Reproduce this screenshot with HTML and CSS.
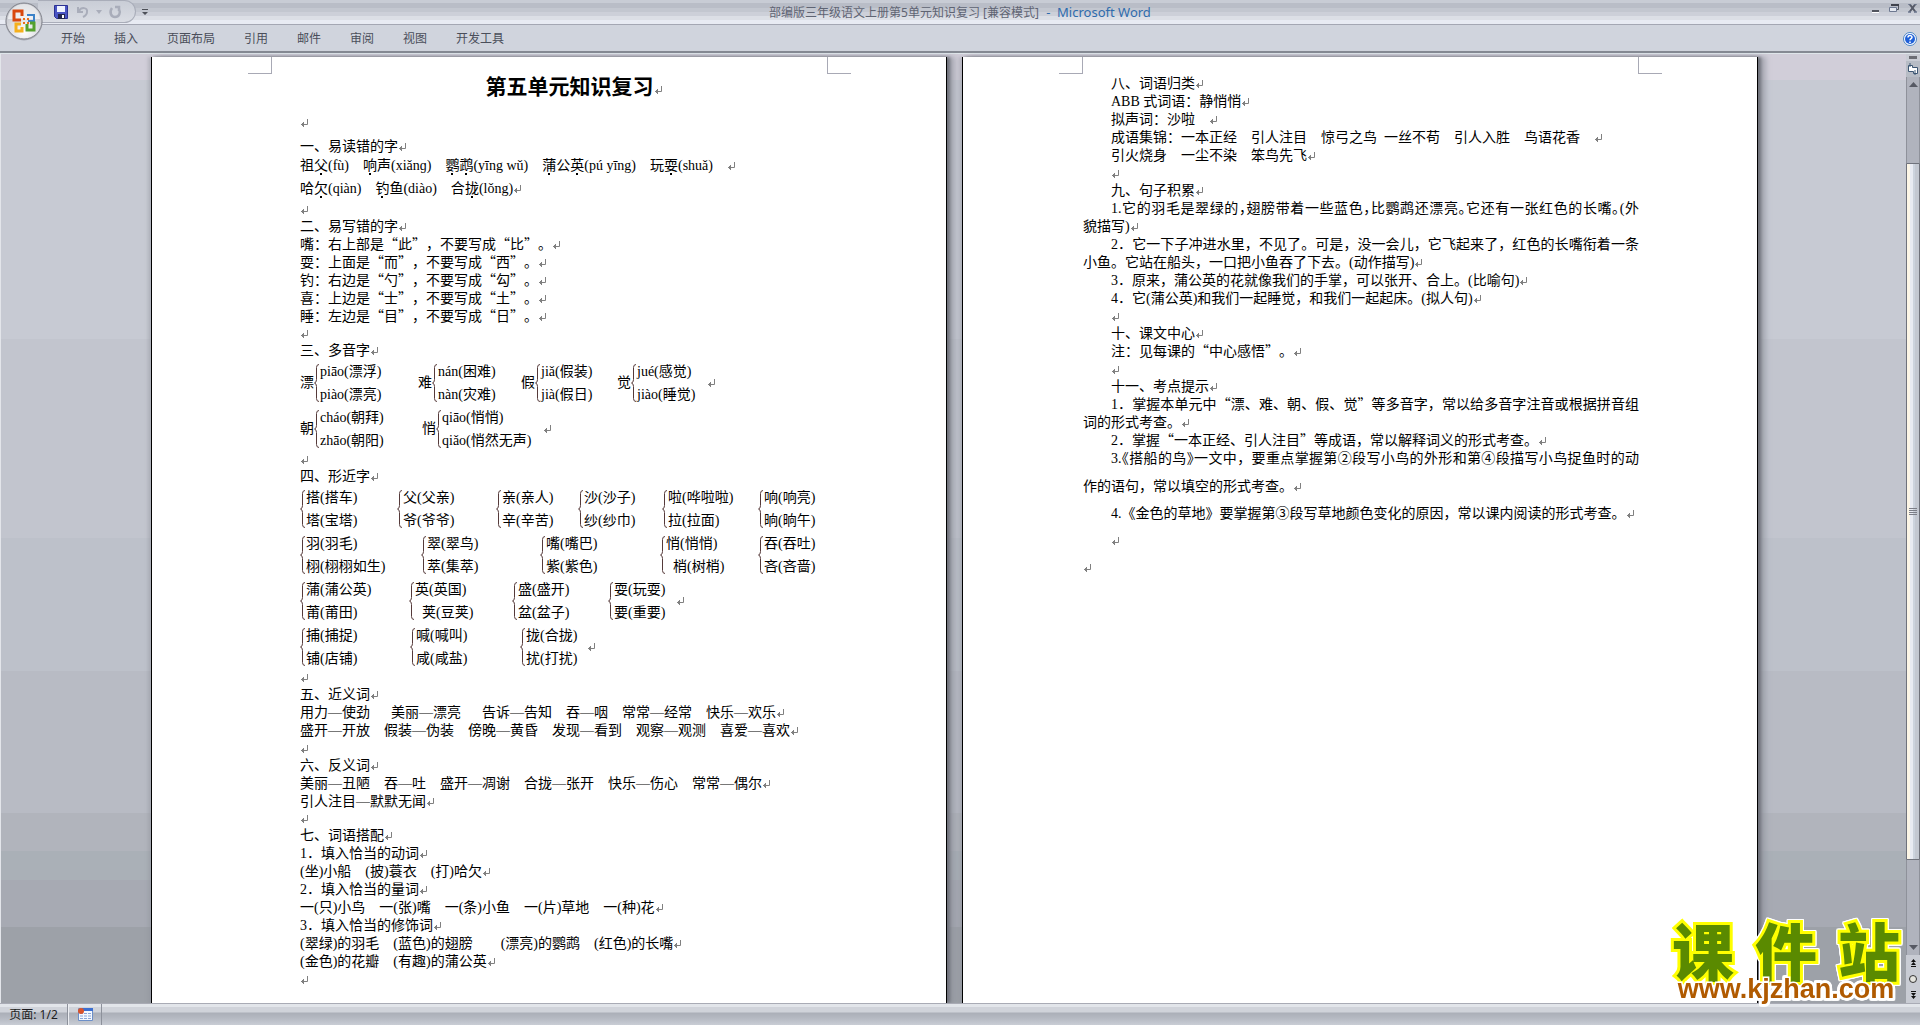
FILE: index.html
```html
<!DOCTYPE html>
<html lang="zh-CN">
<head>
<meta charset="utf-8">
<title>部编版三年级语文上册第5单元知识复习 [兼容模式] - Microsoft Word</title>
<link rel="stylesheet" href="styles.css">
</head>
<body>
<header class="titlebar">
  <div class="tools">
    <div class="quick">
      <button class="qbtn" aria-label="保存"><svg width="14" height="14" viewBox="0 0 14 14"><path d="M.5.5h13v13h-11l-2-2z" fill="#4a55c4" stroke="#2b3192"/><path d="M3 1h8v6H3z" fill="#eef3ff"/><path d="M4 9h7v5H4z" fill="#22264f"/><path d="M8 10h2v3H8z" fill="#fff"/></svg></button>
      <button class="qbtn" aria-label="撤消"><svg width="14" height="14" viewBox="0 0 14 14"><path d="M2 2v5h5M3 6c2-4 9-4 8 1 0 3-2 4-4 5" fill="none" stroke="#a9adba" stroke-width="2"/></svg></button>
      <button class="qbtn small" aria-label="撤消列表"><svg width="6" height="4" viewBox="0 0 6 4"><path d="M0 0h6L3 4z" fill="#a9adba"/></svg></button>
      <button class="qbtn" aria-label="恢复"><svg width="14" height="14" viewBox="0 0 14 14"><path d="M7 2h4v4M11 4c2 4 0 8-4 8S1 7 4 3" fill="none" stroke="#a9adba" stroke-width="2.500"/></svg></button>
    </div>
    <button class="more" aria-label="自定义快速访问工具栏"><svg width="6" height="6" viewBox="0 0 6 6"><path d="M0 0h6v1H0zM0 3h6L3 6z" fill="#4d5058"/></svg></button>
  </div>
  <h1 class="caption">部编版三年级语文上册第5单元知识复习 [兼容模式] <span class="app">- &nbsp;Microsoft Word</span></h1>
  <div class="winbtns">
    <button aria-label="最小化"><svg width="9" height="9" viewBox="0 0 9 9"><path d="M1 6h7v2H1z" fill="#51545e"/><path d="M1 8h7v1H1z" fill="#fff"/></svg></button>
    <button aria-label="还原"><svg width="10" height="9" viewBox="0 0 10 9"><path d="M2.500 1h7v4.500h-2" fill="none" stroke="#51545e"/><path d="M2 0h8v2H2z" fill="#3f424c"/><path d="M.5 3.500h7v4h-7z" fill="#e4e8f0" stroke="#6d7890"/></svg></button>
    <button aria-label="关闭"><svg width="9" height="9" viewBox="0 0 9 9"><path d="M1.500 0l6 8M7.500 0l-6 8" stroke="#555a68" stroke-width="2" fill="none"/><path d="M0 0h3M6 0h3M0 8h3M6 8h3" stroke="#6d7890" stroke-width="1.500"/></svg></button>
  </div>
</header>
<button class="office" aria-label="Office 按钮"><svg width="38" height="40" viewBox="0 0 38 40">
  <defs><radialGradient id="orb" cx=".5" cy=".8" r=".8"><stop offset="0" stop-color="#fff"/><stop offset=".5" stop-color="#dcdde2"/><stop offset="1" stop-color="#b4b6be"/></radialGradient></defs>
  <circle cx="19" cy="20" r="18.500" fill="#8b8e98" opacity=".6"/><circle cx="19" cy="19" r="18" fill="url(#orb)" stroke="#85878f"/><path d="M3 17a16 15 0 0 1 32 0z" fill="#fff" opacity=".6"/>
  <g fill="none" stroke-width="3"><path d="M16 18H9V9h8v5" stroke="#d9480f"/><path d="M22 13h7v6h-6" stroke="#3c82c8" stroke-width="2"/><path d="M16 22h-5v7h6v-4" stroke="#f5b01c"/><path d="M22 22v6h7v-7h-4" stroke="#55a12d"/></g>
  <path d="M18 16h2v2h-2zM22 16h2v2h-2zM18 20h2v2h-2zM22 20h2v2h-2z" fill="#e8701c"/></svg></button>
<nav class="tabs">
  <button>开始</button><button>插入</button><button>页面布局</button><button>引用</button><button>邮件</button><button>审阅</button><button>视图</button><button>开发工具</button>
  <button class="help" aria-label="帮助"><svg width="14" height="14" viewBox="0 0 14 14"><circle cx="7" cy="7" r="6.500" fill="#fff" stroke="#4b83c4"/><circle cx="7" cy="7" r="5" fill="#2060d8"/><path d="M5 5.500c0-2.500 4-2.500 4-.2C9 6.700 7 6.600 7 8.300" fill="none" stroke="#fff" stroke-width="1.500"/><path d="M6.200 9.500h1.600V11H6.200z" fill="#fff"/></svg></button>
</nav>
<main class="workspace">
  <div class="desk">
    <article class="page">
      <div class="marks"><i class="mark start"></i><i class="mark end"></i></div>
      <div class="text first">
        <h2>第五单元知识复习</h2>
        <p class="lead"></p>
        <h3>一、易读错的字</h3>
        <p class="tall">祖<em>父</em>(fù)　<em>响</em>声(xiǎnɡ)　<em>鹦</em><em>鹉</em>(yīng wǔ)　<em>蒲</em>公<em>英</em>(pú yīng)　玩<em>耍</em>(shuǎ)　</p>
        <p class="tall">哈<em>欠</em>(qiàn)　<em>钓</em>鱼(diào)　合<em>拢</em>(lǒng)</p>
        <p class="blank tight"></p>
        <h3>二、易写错的字</h3>
        <p>嘴：右上部是<q>此</q>，不要写成<q>比</q>。</p>
        <p>耍：上面是<q>而</q>，不要写成<q>西</q>。</p>
        <p>钓：右边是<q>勺</q>，不要写成<q>勾</q>。</p>
        <p>喜：上边是<q>士</q>，不要写成<q>土</q>。</p>
        <p>睡：左边是<q>目</q>，不要写成<q>日</q>。</p>
        <p class="blank tight"></p>
        <h3>三、多音字</h3>
        <div class="row sounds-a"><span class="set">漂<span class="pair">piāo(漂浮)<br>piào(漂亮)</span></span><span class="set">难<span class="pair">nán(困难)<br>nàn(灾难)</span></span><span class="set">假<span class="pair">jiǎ(假装)<br>jià(假日)</span></span><span class="set">觉<span class="pair">jué(感觉)<br>jiào(睡觉)</span></span><span class="ret"></span></div>
        <div class="row sounds-b"><span class="set">朝<span class="pair">cháo(朝拜)<br>zhāo(朝阳)</span></span><span class="set">悄<span class="pair">qiāo(悄悄)<br>qiǎo(悄然无声)</span></span><span class="ret"></span></div>
        <p class="blank tight"></p>
        <h3>四、形近字</h3>
        <div class="row forms-a"><span class="pair">搭(搭车)<br>塔(宝塔)</span><span class="pair">父(父亲)<br>爷(爷爷)</span><span class="pair">亲(亲人)<br>辛(辛苦)</span><span class="pair">沙(沙子)<br>纱(纱巾)</span><span class="pair">啦(哗啦啦)<br>拉(拉面)</span><span class="pair">响(响亮)<br>晌(晌午)</span></div>
        <div class="row forms-b"><span class="pair">羽(羽毛)<br>栩(栩栩如生)</span><span class="pair">翠(翠鸟)<br>萃(集萃)</span><span class="pair">嘴(嘴巴)<br>紫(紫色)</span><span class="pair">悄(悄悄)<br>&nbsp;&nbsp;梢(树梢)</span><span class="pair">吞(吞吐)<br>吝(吝啬)</span></div>
        <div class="row forms-c"><span class="pair">蒲(蒲公英)<br>莆(莆田)</span><span class="pair">英(英国)<br>&nbsp;&nbsp;荚(豆荚)</span><span class="pair">盛(盛开)<br>盆(盆子)</span><span class="pair">耍(玩耍)<br>要(重要)</span><span class="ret"></span></div>
        <div class="row forms-d"><span class="pair">捕(捕捉)<br>铺(店铺)</span><span class="pair">喊(喊叫)<br>咸(咸盐)</span><span class="pair">拢(合拢)<br>扰(打扰)</span><span class="ret"></span></div>
        <p class="blank tight"></p>
        <h3>五、近义词</h3>
        <p>用力—使劲　&nbsp;&nbsp;美丽—漂亮　&nbsp;&nbsp;告诉—告知　吞—咽　常常—经常　快乐—欢乐</p>
        <p>盛开—开放　假装—伪装　傍晚—黄昏　发现—看到　观察—观测　喜爱—喜欢</p>
        <p class="blank"></p>
        <h3>六、反义词</h3>
        <p>美丽—丑陋　吞—吐　盛开—凋谢　合拢—张开　快乐—伤心　常常—偶尔</p>
        <p>引人注目—默默无闻</p>
        <p class="blank tight"></p>
        <h3>七、词语搭配</h3>
        <h4>1．填入恰当的动词</h4>
        <p>(坐)小船　(披)蓑衣　(打)哈欠</p>
        <h4>2．填入恰当的量词</h4>
        <p>一(只)小鸟　一(张)嘴　一(条)小鱼　一(片)草地　一(种)花</p>
        <h4>3．填入恰当的修饰词</h4>
        <p>(翠绿)的羽毛　(蓝色)的翅膀　　(漂亮)的鹦鹉　(红色)的长嘴</p>
        <p>(金色)的花瓣　(有趣)的蒲公英</p>
        <p class="blank"></p>
      </div>
    </article>
    <article class="page">
      <div class="marks"><i class="mark start"></i><i class="mark end"></i></div>
      <div class="text second">
        <h3>八、词语归类</h3>
        <p>ABB 式词语：静悄悄</p>
        <p>拟声词：沙啦　</p>
        <p>成语集锦：一本正经　引人注目　惊弓之鸟&nbsp;&nbsp;一丝不苟　引人入胜　鸟语花香　</p>
        <p>引火烧身　一尘不染　笨鸟先飞</p>
        <p class="blank"></p>
        <h3>九、句子积累</h3>
        <p class="full half">1.它的羽毛是翠绿的，翅膀带着一些蓝色，比鹦鹉还漂亮。它还有一张红色的长嘴。(外</p>
        <p class="rest">貌描写)</p>
        <p class="full">2．它一下子冲进水里，不见了。可是，没一会儿，它飞起来了，红色的长嘴衔着一条</p>
        <p class="rest">小鱼。它站在船头，一口把小鱼吞了下去。(动作描写)</p>
        <p>3．原来，蒲公英的花就像我们的手掌，可以张开、合上。(比喻句)</p>
        <p>4．它(蒲公英)和我们一起睡觉，和我们一起起床。(拟人句)</p>
        <p class="blank"></p>
        <h3>十、课文中心</h3>
        <p>注：见每课的<q>中心感悟</q>。</p>
        <p class="blank"></p>
        <h3>十一、考点提示</h3>
        <p class="full">1．掌握本单元中<q>漂、难、朝、假、觉</q>等多音字，常以给多音字注音或根据拼音组</p>
        <p class="rest">词的形式考查。</p>
        <p>2．掌握<q>一本正经、引人注目</q>等成语，常以解释词义的形式考查。</p>
        <p class="full">3.<span class="half">《</span>搭船的鸟<span class="half">》</span>一文中，要重点掌握第②段写小鸟的外形和第④段描写小鸟捉鱼时的动</p>
        <div class="loose">
          <p class="rest">作的语句，常以填空的形式考查。</p>
          <p>4.《金色的草地》要掌握第③段写草地颜色变化的原因，常以课内阅读的形式考查。</p>
          <p></p>
          <p class="rest"></p>
        </div>
      </div>
    </article>
  </div>
  <aside class="scroll">
    <i class="split"></i>
    <button class="ruler" aria-label="标尺"><svg width="12" height="12" viewBox="0 0 12 12"><path d="M1.500 2.500h4v2h5v6h-4v-2h-5z" fill="#fff" stroke="#3d5673"/><path d="M3 0v4M8 7v5" stroke="#3d5673"/></svg></button>
    <div class="track">
      <button aria-label="向上滚动"><svg width="9" height="5" viewBox="0 0 9 5"><path d="M4.500 0L9 5H0z" fill="#565963"/></svg></button>
      <div class="thumb"><i></i><i></i><i></i><i></i></div>
      <button aria-label="向下滚动"><svg width="9" height="5" viewBox="0 0 9 5"><path d="M0 0h9L4.500 5z" fill="#565963"/></svg></button>
    </div>
    <button class="jump" aria-label="前一页"><svg width="7" height="8" viewBox="0 0 7 8"><path d="M3.500 0L6 3H1zM3.500 3L6 6H1zM1 7h5v1H1z" fill="#111"/></svg></button>
    <button class="jump" aria-label="选择浏览对象"><svg width="8" height="8" viewBox="0 0 8 8"><circle cx="4" cy="4" r="3.500" fill="#e4e4de" stroke="#333"/></svg></button>
    <button class="jump" aria-label="下一页"><svg width="7" height="8" viewBox="0 0 7 8"><path d="M1 0h5v1H1zM1 2h5L3.500 5zM1 5h5L3.500 8z" fill="#111"/></svg></button>
  </aside>
</main>
<footer class="status">
  <button class="pages">页面: 1/2</button>
  <button class="macro" aria-label="录制宏"><svg width="15" height="13" viewBox="0 0 15 13"><path d="M.5.5h14v12H.5z" fill="#f4f8ff" stroke="#6c8fc8"/><path d="M4 0h11v3H4z" fill="#3c6fd0"/><path d="M2 5.500h11M2 8h11M2 10.500h11" stroke="#8aa6d8" stroke-dasharray="3 1"/><circle cx="3" cy="3" r="3" fill="#d9532c"/></svg></button>
</footer>
<div class="brand"><div class="name"><span>课</span><span>件</span><span>站</span></div><div class="site">www.kjzhan.com</div></div>
</body>
</html>
```
FILE: styles.css
```css
* { box-sizing: border-box; }
body {
  margin: 0;
  height: 100vh;
  display: flex;
  flex-direction: column;
  overflow: hidden;
  position: relative;
  background: #d0d4dd;
  font: 12px/16px "Noto Sans", "Noto Sans CJK SC", sans-serif;
  color: #4a4e5a;
  text-spacing-trim: space-all;
  text-autospace: no-autospace;
}
button {
  margin: 0;
  padding: 0;
  border: 0;
  background: none;
  color: inherit;
  font: inherit;
  display: flex;
  align-items: center;
  justify-content: center;
}
h1, h2, h3, h4, p { margin: 0; font-weight: 400; }
svg { display: block; }

.titlebar {
  flex: none;
  height: 25px;
  display: grid;
  grid-template-columns: 1fr auto 1fr;
  align-items: center;
  border-bottom: 1px solid #a4a7b3;
  background: linear-gradient(#c8ccd5 0 3px, #b9bdc7 3px 8px, #c3c7d0 8px 12px, #cdd0d9 12px 16px, #dcdfe6 16px 20px, #e8ebf3 20px);
}
.tools { display: flex; align-self: start; padding-left: 38px; }
.quick {
  display: flex;
  align-items: center;
  height: 23px;
  width: 98px;
  padding-left: 16px;
  gap: 8px;
  border: 1px solid #a9adb9;
  border-left: 0;
  border-radius: 0 12px 12px 0;
  background: linear-gradient(#c9cdd6, #dadde4);
}
.small { margin: 0 -2px; }
.more { padding-left: 6px; }
.caption { font-size: 12px; line-height: 18px; color: #5f6473; white-space: nowrap; }
.app { font-size: 13px; color: #2f6cad; padding-left: 4px; }
.winbtns { display: flex; justify-content: flex-end; gap: 9px; padding-right: 3px; align-self: start; padding-top: 4px; }

.office { position: absolute; left: 5px; top: 2px; }

.tabs {
  flex: none;
  height: 28px;
  display: flex;
  align-items: center;
  gap: 29px;
  padding: 2px 3px 0 61px;
  border-bottom: 2px solid #858a93;
}
.help { margin-left: auto; }

.workspace { flex: 1; min-height: 0; display: flex; border-top: 1px solid #dfe6ea; }
.desk {
  flex: 1;
  min-width: 0;
  display: flex;
  justify-content: center;
  gap: 15px;
  padding: 3px 0 0 2px;
  border-left: 1px solid #e3e5ea;
  background: linear-gradient(#d1ced9 0 26px, #c7cad3 26px 30%, #c2c5ce 30% 51%, #bdc1ca 51% 65%, #b8bbc4 65% 80%, #b1b4bc 80% 84%, #aab0b7 84% 87%, #a7aab3 87% 92%, #9da1a8 92%);
}
.page {
  flex: 0 1 796px;
  border: solid #000;
  border-width: 0 1px;
  background: #fff;
  box-shadow: 3px 0 3px #6f717a, 8px 0 5px #8f929c99, -3px 0 3px #8f929c66;
}
.marks { height: 17px; display: flex; justify-content: space-between; padding: 0 95px 0 96px; }
.mark { width: 24px; border-bottom: 1px solid #a8a9b5; }
.start { border-right: 1px solid #a8a9b5; }
.end { border-left: 1px solid #a8a9b5; }

.text {
  font: 14px/18px "Liberation Serif", "Noto Sans CJK SC", serif;
  color: #000;
  white-space: nowrap;
}
.first { padding: 1px 99px 0 148px; }
.second { padding: 1px 118px 0 120px; }
.second h3, .second p { padding-left: 28px; }
.second .rest { padding-left: 0; }
.text p, .text h3, .text h4 { font-size: 14px; height: 18px; line-height: 18px; }
.text h2 { font-size: 21px; line-height: 24px; font-weight: 700; text-align: center; margin-bottom: 9px; }
.text .lead { height: 30px; line-height: 30px; }
.text .tall { height: 23px; line-height: 20px; }
.text .blank { height: 17px; line-height: 17px; }
.text .tight { height: 16px; line-height: 16px; }
.text .full { text-align-last: justify; white-space: normal; }
.half { font-feature-settings: "halt"; }
.loose { padding-top: 5px; }
.loose p { height: 27px; line-height: 27px; }
.text q { quotes: none; }
.text q::before, .text q::after { font-family: "Noto Sans CJK SC", sans-serif; line-height: 1; }
.text q::before { content: "“"; }
.text q::after { content: "”"; }
.text em {
  font-style: normal;
  padding-bottom: 2px;
  background: linear-gradient(#000, #000) center bottom / 2px 2px no-repeat;
}
.text h2::after, .text h3::after, .text h4::after, .text p:not(.full)::after, .ret {
  content: "";
  display: inline-block;
  width: 8px;
  height: 8px;
  background: url("data:image/svg+xml,%3Csvg xmlns='http://www.w3.org/2000/svg' viewBox='0 0 8 8'%3E%3Cpath d='M7.500 0v5.500H1M3.500 3v5M2.500 4v3' fill='none' stroke='%23808080'/%3E%3C/svg%3E") no-repeat;
}
.row { display: grid; align-items: center; height: 46px; }
.set { display: flex; align-items: center; }
.pair {
  line-height: 23px;
  padding-left: 6px;
  background: url("data:image/svg+xml,%3Csvg xmlns='http://www.w3.org/2000/svg' width='6' height='38' viewBox='0 0 6 38'%3E%3Cpath d='M5 .5q-2.500 0-2.500 3v12q0 3-2 3.500 2 .5 2 3.500v12q0 3 2.500 3' fill='none' stroke='%23553a3a'/%3E%3C/svg%3E") 0 center no-repeat;
}
.sounds-a { grid-template-columns: 118px 103px 96px 90px 8px; }
.sounds-b { grid-template-columns: 122px 121px 8px; }
.forms-a { grid-template-columns: 97px 99px 82px 84px 96px 60px; }
.forms-b { grid-template-columns: 121px 119px 120px 98px 60px; }
.forms-c { grid-template-columns: 109px 103px 96px 68px 8px; }
.forms-d { grid-template-columns: 110px 110px 67px 8px; }

.scroll {
  flex: none;
  width: 14px;
  display: flex;
  flex-direction: column;
  align-items: center;
  padding-top: 2px;
  background: #c9ccd4;
}
.split { width: 8px; height: 3px; background: #6b6d74; margin-bottom: 2px; }
.ruler { width: 14px; height: 16px; background: #b7bcc5; }
.track {
  flex: 1;
  width: 14px;
  display: flex;
  flex-direction: column;
  align-items: center;
  padding: 5px 0;
  border: solid #8e919a;
  border-width: 0 1px;
  background: #b0b3bd;
}
.thumb {
  width: 14px;
  flex: 0 1 697px;
  margin: 76px 0 auto;
  display: flex;
  flex-direction: column;
  align-items: center;
  justify-content: center;
  gap: 1px;
  border: 1px solid #6f727c;
  border-radius: 1px;
  background: linear-gradient(90deg, #fdf6e6 0 3px, #e8ebf3 3px 6px, #ccd3de 6px 8px, #c3c8d2 8px);
}
.thumb i { width: 8px; height: 1px; background: #7b7e88; }
.jump { height: 16px; width: 14px; }

.status {
  flex: none;
  height: 22px;
  display: flex;
  border-top: 1px solid #a9abb5;
  background: linear-gradient(#e2e5ea 0 3px, #d0d3da 3px 8px, #abafb8 9px, #b5b9c2 14px, #c9cdd5);
  color: #1c1c20;
}
.pages { width: 68px; border-right: 1px solid #8d919b; }
.macro { width: 34px; border-right: 1px solid #8d919b; border-left: 1px solid #eceef2; }

.brand {
  position: absolute;
  right: 20px;
  bottom: 22px;
  width: 228px;
  filter: drop-shadow(1px 0 #fff) drop-shadow(-1px 0 #fff) drop-shadow(0 1px #fff) drop-shadow(0 -1px #fff);
}
.name {
  display: flex;
  justify-content: space-between;
  font: 900 62px/52px "Noto Sans CJK SC", sans-serif;
  color: #5a8a00;
  -webkit-text-stroke: 6px #ff0;
  paint-order: stroke fill;
}
.site {
  font: 700 27px/28px "Liberation Sans", sans-serif;
  color: #b05a00;
  -webkit-text-stroke: 3px #fff;
  paint-order: stroke fill;
  text-align: center;
}
```
